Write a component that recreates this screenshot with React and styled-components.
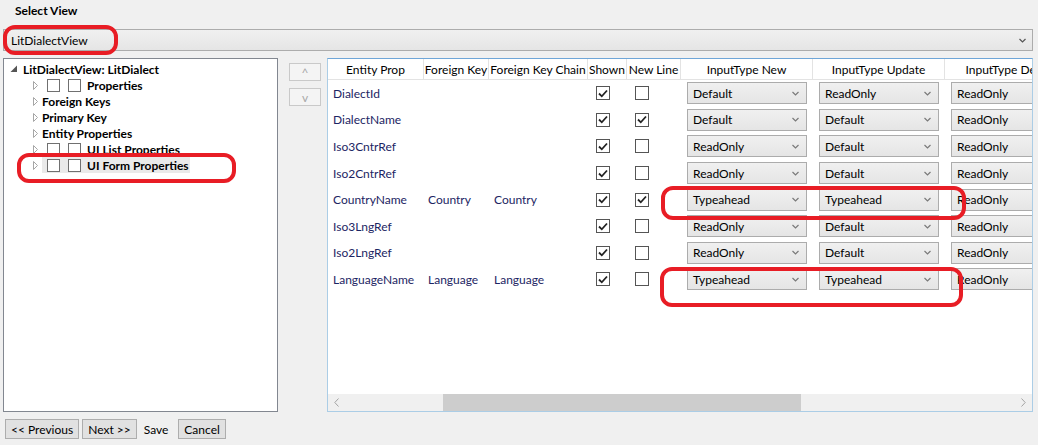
import styled, { createGlobalStyle } from "styled-components";

const GlobalStyle = createGlobalStyle`
    body {
        margin: 0;
        background: #f0f0f0;
        font-family: Lato, "Open Sans", sans-serif;
        font-size: 12px;
        color: #000;
    }
`;

const columns = [
    { title: "Entity Prop", width: 96 },
    { title: "Foreign Key", width: 65 },
    { title: "Foreign Key Chain", width: 99 },
    { title: "Shown", width: 39 },
    { title: "New Line", width: 54 },
    { title: "InputType New", width: 132 },
    { title: "InputType Update", width: 132 },
    { title: "InputType Delete", width: 132 },
];
const gridTemplate = columns.map(c => `${c.width}px`).join(" ");

const rows = [
    { name: "DialectId", fk: "", chain: "", shown: true, newLine: false, types: ["Default", "ReadOnly", "ReadOnly"] },
    { name: "DialectName", fk: "", chain: "", shown: true, newLine: true, types: ["Default", "Default", "ReadOnly"] },
    { name: "Iso3CntrRef", fk: "", chain: "", shown: true, newLine: false, types: ["ReadOnly", "Default", "ReadOnly"] },
    { name: "Iso2CntrRef", fk: "", chain: "", shown: true, newLine: false, types: ["ReadOnly", "Default", "ReadOnly"] },
    { name: "CountryName", fk: "Country", chain: "Country", shown: true, newLine: true, types: ["Typeahead", "Typeahead", "ReadOnly"] },
    { name: "Iso3LngRef", fk: "", chain: "", shown: true, newLine: false, types: ["ReadOnly", "Default", "ReadOnly"] },
    { name: "Iso2LngRef", fk: "", chain: "", shown: true, newLine: false, types: ["ReadOnly", "Default", "ReadOnly"] },
    { name: "LanguageName", fk: "Language", chain: "Language", shown: true, newLine: false, types: ["Typeahead", "Typeahead", "ReadOnly"] },
];

const treeItems = [
    { label: "Properties", boxes: true },
    { label: "Foreign Keys" },
    { label: "Primary Key" },
    { label: "Entity Properties" },
    { label: "UI List Properties", boxes: true },
    { label: "UI Form Properties", boxes: true, selected: true },
];

const Window = styled.div`
    position: relative;
    width: 1038px;
    height: 445px;
    overflow: hidden;
    display: flex;
    flex-direction: column;
    background: #f0f0f0;
`;

const Title = styled.div`
    height: 29px;
    padding: 3px 0 0 15px;
    box-sizing: border-box;
    line-height: 16px;
    font-weight: 700;
`;

const ViewCombo = styled.div`
    margin: 0 5px 0 3px;
    height: 22px;
    box-sizing: border-box;
    border: 1px solid #acacac;
    background: linear-gradient(#f0f0f0, #e5e5e5);
    display: flex;
    align-items: center;
    justify-content: space-between;
    padding: 0 6px 0 7px;
`;

const Main = styled.div`
    display: flex;
    margin-top: 7px;
    padding-left: 3px;
    height: 354px;
`;

const Tree = styled.div`
    width: 275px;
    box-sizing: border-box;
    border: 1px solid #828790;
    background: #fff;
    padding-top: 2px;
`;

const TreeRow = styled.div`
    display: flex;
    align-items: center;
    height: 16px;
    padding-left: ${p => p.$indent}px;
    font-weight: 700;
`;

const TreeLabel = styled.div`
    display: flex;
    align-items: center;
    height: 16px;
    padding-right: 1px;
    background: ${p => (p.$selected ? "#eaeaea" : "transparent")};
`;

const Box = styled.span`
    width: 13px;
    height: 13px;
    box-sizing: border-box;
    border: 1px solid #707070;
    background: #fff;
    margin-left: ${p => p.$gap}px;
    margin-right: ${p => p.$after ?? 0}px;
`;

const MoveColumn = styled.div`
    width: 32px;
    margin-left: 11px;
    padding-top: 5px;
    display: flex;
    flex-direction: column;
    gap: 7px;
`;

const MoveButton = styled.div`
    height: 18px;
    box-sizing: border-box;
    border: 1px solid #c9c9c9;
    background: #f4f4f4;
    color: #a8a8a8;
    display: flex;
    align-items: center;
    justify-content: center;
`;

const Grid = styled.div`
    margin-left: 6px;
    width: 706px;
    box-sizing: border-box;
    border: 1px solid #abcde6;
    border-top-color: #6fa6d8;
    background: #fff;
    display: flex;
    flex-direction: column;
    overflow: hidden;
`;

const GridBody = styled.div`
    flex: 1;
    overflow: hidden;
`;

const HeaderRow = styled.div`
    display: grid;
    grid-template-columns: ${gridTemplate};
    height: 20px;
    border-bottom: 1px solid #e3e3e3;
    width: max-content;
`;

const HeaderCell = styled.div`
    display: flex;
    align-items: center;
    justify-content: center;
    white-space: nowrap;
    overflow: hidden;
    border-right: 1px solid #e3e3e3;
`;

const Row = styled.div`
    display: grid;
    grid-template-columns: ${gridTemplate};
    height: 26.6px;
    width: max-content;
    color: #1c2563;
`;

const Cell = styled.div`
    display: flex;
    align-items: center;
    padding-left: ${p => p.$pad ?? 5}px;
    white-space: nowrap;
    overflow: hidden;
`;

const CheckBox = styled.span`
    width: 14px;
    height: 14px;
    box-sizing: border-box;
    border: 1px solid #555;
    background: #fff;
    display: inline-flex;
    align-items: center;
    justify-content: center;
`;

const Select = styled.div`
    width: ${p => p.$width}px;
    height: 22px;
    box-sizing: border-box;
    border: 1px solid #acacac;
    background: linear-gradient(#f0f0f0, #e5e5e5);
    color: #000;
    display: flex;
    align-items: center;
    justify-content: space-between;
    padding: 0 7px 0 5px;
    flex-shrink: 0;
`;

const ScrollBar = styled.div`
    height: 17px;
    background: #f0f0f0;
    display: flex;
    align-items: stretch;
`;

const ScrollArrow = styled.div`
    width: 17px;
    display: flex;
    align-items: center;
    justify-content: center;
`;

const ScrollTrack = styled.div`
    flex: 1;
    display: flex;
`;

const ScrollThumb = styled.div`
    background: #cdcdcd;
`;

const Footer = styled.div`
    display: flex;
    align-items: center;
    gap: 3px;
    padding: 7px 0 0 5px;
`;

const Button = styled.button`
    height: 20px;
    box-sizing: border-box;
    border: 1px solid ${p => (p.$flat ? "transparent" : "#adadad")};
    background: ${p => (p.$flat ? "transparent" : "#e1e1e1")};
    font: inherit;
    color: #000;
    padding: ${p => (p.$flat ? "0 6px 0 3px" : "0 5px")};
    margin: 0;
`;

const Mark = styled.div`
    position: absolute;
    left: ${p => p.$x}px;
    top: ${p => p.$y}px;
    width: ${p => p.$w}px;
    height: ${p => p.$h}px;
    box-sizing: border-box;
    border: 4px solid #e81d25;
    border-radius: 12px;
    pointer-events: none;
`;

const Chevron = ({ color = "#7a7a7a" }) => (
    <svg width="7" height="5" viewBox="0 0 7 5">
        <path d="M0.5 1 L3.5 4 L6.5 1" fill="none" stroke={color} strokeWidth="1.2" />
    </svg>
);

const Tick = () => (
    <svg width="10" height="9" viewBox="0 0 10 9">
        <path d="M1 4.5 L3.8 7.3 L9 1.5" fill="none" stroke="#222" strokeWidth="1.8" />
    </svg>
);

const Expander = () => (
    <svg width="10" height="9" viewBox="0 0 10 9">
        <path d="M1.5 0.5 L5.5 4.5 L1.5 8.5 Z" fill="none" stroke="#a6a6a6" strokeWidth="1" />
    </svg>
);

const Expanded = () => (
    <svg width="13" height="8" viewBox="0 0 13 8">
        <path d="M7 0.5 L7 7 L0.5 7 Z" fill="#555" />
    </svg>
);

const App = () => (
    <>
        <GlobalStyle />
        <Window>
            <Title>Select View</Title>
            <ViewCombo>
                <span>LitDialectView</span>
                <Chevron color="#555" />
            </ViewCombo>
            <Main>
                <Tree>
                    <TreeRow $indent={6}>
                        <Expanded />
                        LitDialectView: LitDialect
                    </TreeRow>
                    {treeItems.map(item => (
                        <TreeRow key={item.label} $indent={28}>
                            <Expander />
                            <TreeLabel $selected={item.selected}>
                                {item.boxes && (
                                    <>
                                        <Box $gap={5} />
                                        <Box $gap={8} $after={6} />
                                    </>
                                )}
                                {item.label}
                            </TreeLabel>
                        </TreeRow>
                    ))}
                </Tree>
                <MoveColumn>
                    <MoveButton>^</MoveButton>
                    <MoveButton>v</MoveButton>
                </MoveColumn>
                <Grid>
                    <GridBody>
                        <HeaderRow>
                            {columns.map(c => (
                                <HeaderCell key={c.title}>{c.title}</HeaderCell>
                            ))}
                        </HeaderRow>
                        {rows.map(r => (
                            <Row key={r.name}>
                                <Cell>{r.name}</Cell>
                                <Cell $pad={4}>{r.fk}</Cell>
                                <Cell>{r.chain}</Cell>
                                <Cell $pad={8}>
                                    <CheckBox>{r.shown && <Tick />}</CheckBox>
                                </Cell>
                                <Cell $pad={8}>
                                    <CheckBox>{r.newLine && <Tick />}</CheckBox>
                                </Cell>
                                {r.types.map((t, i) => (
                                    <Cell key={i} $pad={6}>
                                        <Select $width={120}>
                                            <span>{t}</span>
                                            <Chevron />
                                        </Select>
                                    </Cell>
                                ))}
                            </Row>
                        ))}
                    </GridBody>
                    <ScrollBar>
                        <ScrollArrow>
                            <svg width="5" height="9" viewBox="0 0 5 9">
                                <path d="M4.5 0.5 L0.8 4.5 L4.5 8.5" fill="none" stroke="#a3a3a3" />
                            </svg>
                        </ScrollArrow>
                        <ScrollTrack>
                            <ScrollThumb style={{ marginLeft: 98, width: 358 }} />
                        </ScrollTrack>
                        <ScrollArrow>
                            <svg width="5" height="9" viewBox="0 0 5 9">
                                <path d="M0.5 0.5 L4.2 4.5 L0.5 8.5" fill="none" stroke="#a3a3a3" />
                            </svg>
                        </ScrollArrow>
                    </ScrollBar>
                </Grid>
            </Main>
            <Footer>
                <Button>&lt;&lt; Previous</Button>
                <Button>Next &gt;&gt;</Button>
                <Button $flat>Save</Button>
                <Button>Cancel</Button>
            </Footer>
            <Mark $x={3} $y={25} $w={115} $h={30} />
            <Mark $x={17} $y={153} $w={219} $h={30} />
            <Mark $x={661} $y={186} $w={305} $h={34} />
            <Mark $x={660} $y={267} $w={303} $h={40} />
        </Window>
    </>
);

export default App;
